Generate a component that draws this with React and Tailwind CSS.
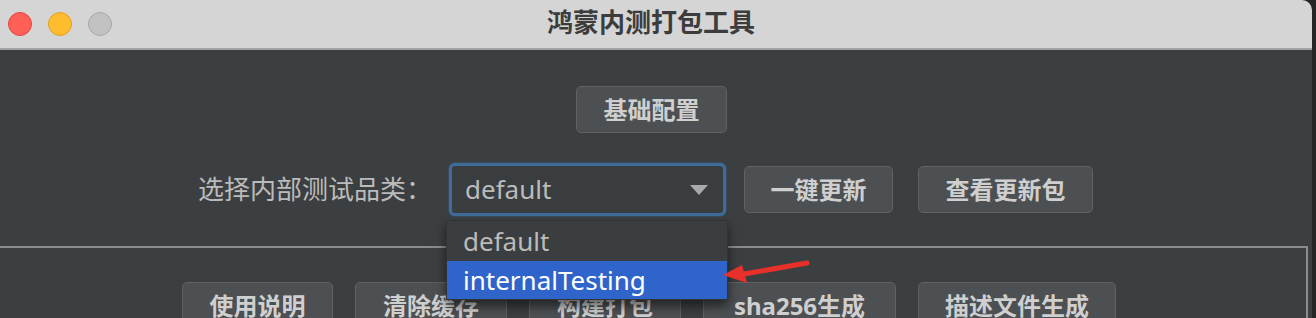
import React from 'react';

const font = "font-['Noto_Sans','Noto_Sans_CJK_SC',sans-serif]";
const btnClass = "h-[47px] px-[27px] flex items-center justify-center bg-[#4c5052] border border-[#5e6265] rounded-[5px] text-[24px] font-bold text-[#cfcfcf] leading-none whitespace-nowrap";

function Button({ children, className = "" }) {
    return <div className={`${btnClass} ${className}`}>{children}</div>;
}

function TrafficLights() {
    return (
        <div className="w-[112px] flex items-center gap-[16px] pl-[8px]">
            <span className="w-[24px] h-[24px] rounded-full bg-[#fe5f57] border border-[#e2463f]" />
            <span className="w-[24px] h-[24px] rounded-full bg-[#febc2e] border border-[#dfa124]" />
            <span className="w-[24px] h-[24px] rounded-full bg-[#c2c2c2] border border-[#a9a9a9]" />
        </div>
    );
}

function ComboBox() {
    return (
        <div className="relative w-[277px] h-[53px]">
            <div className="w-full h-full flex items-center justify-between pl-[13px] pr-[15px] bg-[#3a3d3f] border-[3px] border-[#3f6d9b] rounded-[6px] shadow-[0_0_2px_#3f6d9b]">
                <span className="text-[26px] text-[#bbbbbb] leading-none pb-[2px]">default</span>
                <svg width="18" height="10" viewBox="0 0 18 10">
                    <path d="M0 0 H18 L9 10 Z" fill="#a9a9a9" />
                </svg>
            </div>
            {/* open popup list */}
            <div className="absolute left-[-3px] top-[57px] w-[282px] z-10 bg-[#3b3e40] border border-[#323436] shadow-[0_6px_10px_rgba(0,0,0,0.55)]">
                <div className="h-[40px] flex items-center pl-[16px] text-[26px] text-[#bbbbbb] leading-none">default</div>
                <div className="h-[38px] flex items-center pl-[16px] text-[26px] text-white bg-[#2f65ca] leading-none">internalTesting</div>
            </div>
        </div>
    );
}

function RedArrow() {
    return (
        <svg className="absolute left-[700px] top-[250px] z-20" width="120" height="45" viewBox="0 0 120 45">
            <path d="M107 13 L44 24" stroke="#e8302a" strokeWidth="5" strokeLinecap="round" />
            <path d="M23 25 L42 15 L47 33 Z" fill="#e8302a" />
        </svg>
    );
}

export default function App() {
    return (
        <div className={`w-[1316px] h-[318px] bg-[#262626] overflow-hidden relative ${font}`}>
            <div className="w-[1312px] h-full rounded-tr-[10px] overflow-hidden flex flex-col">
                <div className="h-[50px] shrink-0 flex items-center bg-[#d5d5d5] border-b-2 border-[#a3a3a3]">
                    <TrafficLights />
                    <div className="flex-1 text-center text-[26px] font-bold text-[#3c3c3c] leading-none pb-[4px]">鸿蒙内测打包工具</div>
                    <div className="w-[122px]" />
                </div>

                <div className="flex-1 bg-[#3c3f41] flex flex-col">
                    <div className="pt-[36px] pl-[576px] flex">
                        <Button className="w-[151px]">基础配置</Button>
                    </div>

                    <div className="mt-[30px] flex items-center pl-[198px]">
                        <span className="text-[26px] text-[#bbbbbb] leading-none w-[251px] pb-[2px]">选择内部测试品类：</span>
                        <ComboBox />
                        <Button className="ml-[18px] w-[149px]">一键更新</Button>
                        <Button className="ml-[25px] w-[175px]">查看更新包</Button>
                    </div>

                    <div className="mt-[30px] w-[1308px] flex-1 border-t-2 border-r-2 border-[#8a8b8c] pt-[34px] pl-[182px] flex gap-[22px] items-start">
                        <Button className="w-[151px]">使用说明</Button>
                        <Button className="w-[152px]">清除缓存</Button>
                        <Button className="w-[152px]">构建打包</Button>
                        <Button className="w-[193px]">sha256生成</Button>
                        <Button className="w-[198px]">描述文件生成</Button>
                    </div>
                </div>
            </div>
            <RedArrow />
        </div>
    );
}
